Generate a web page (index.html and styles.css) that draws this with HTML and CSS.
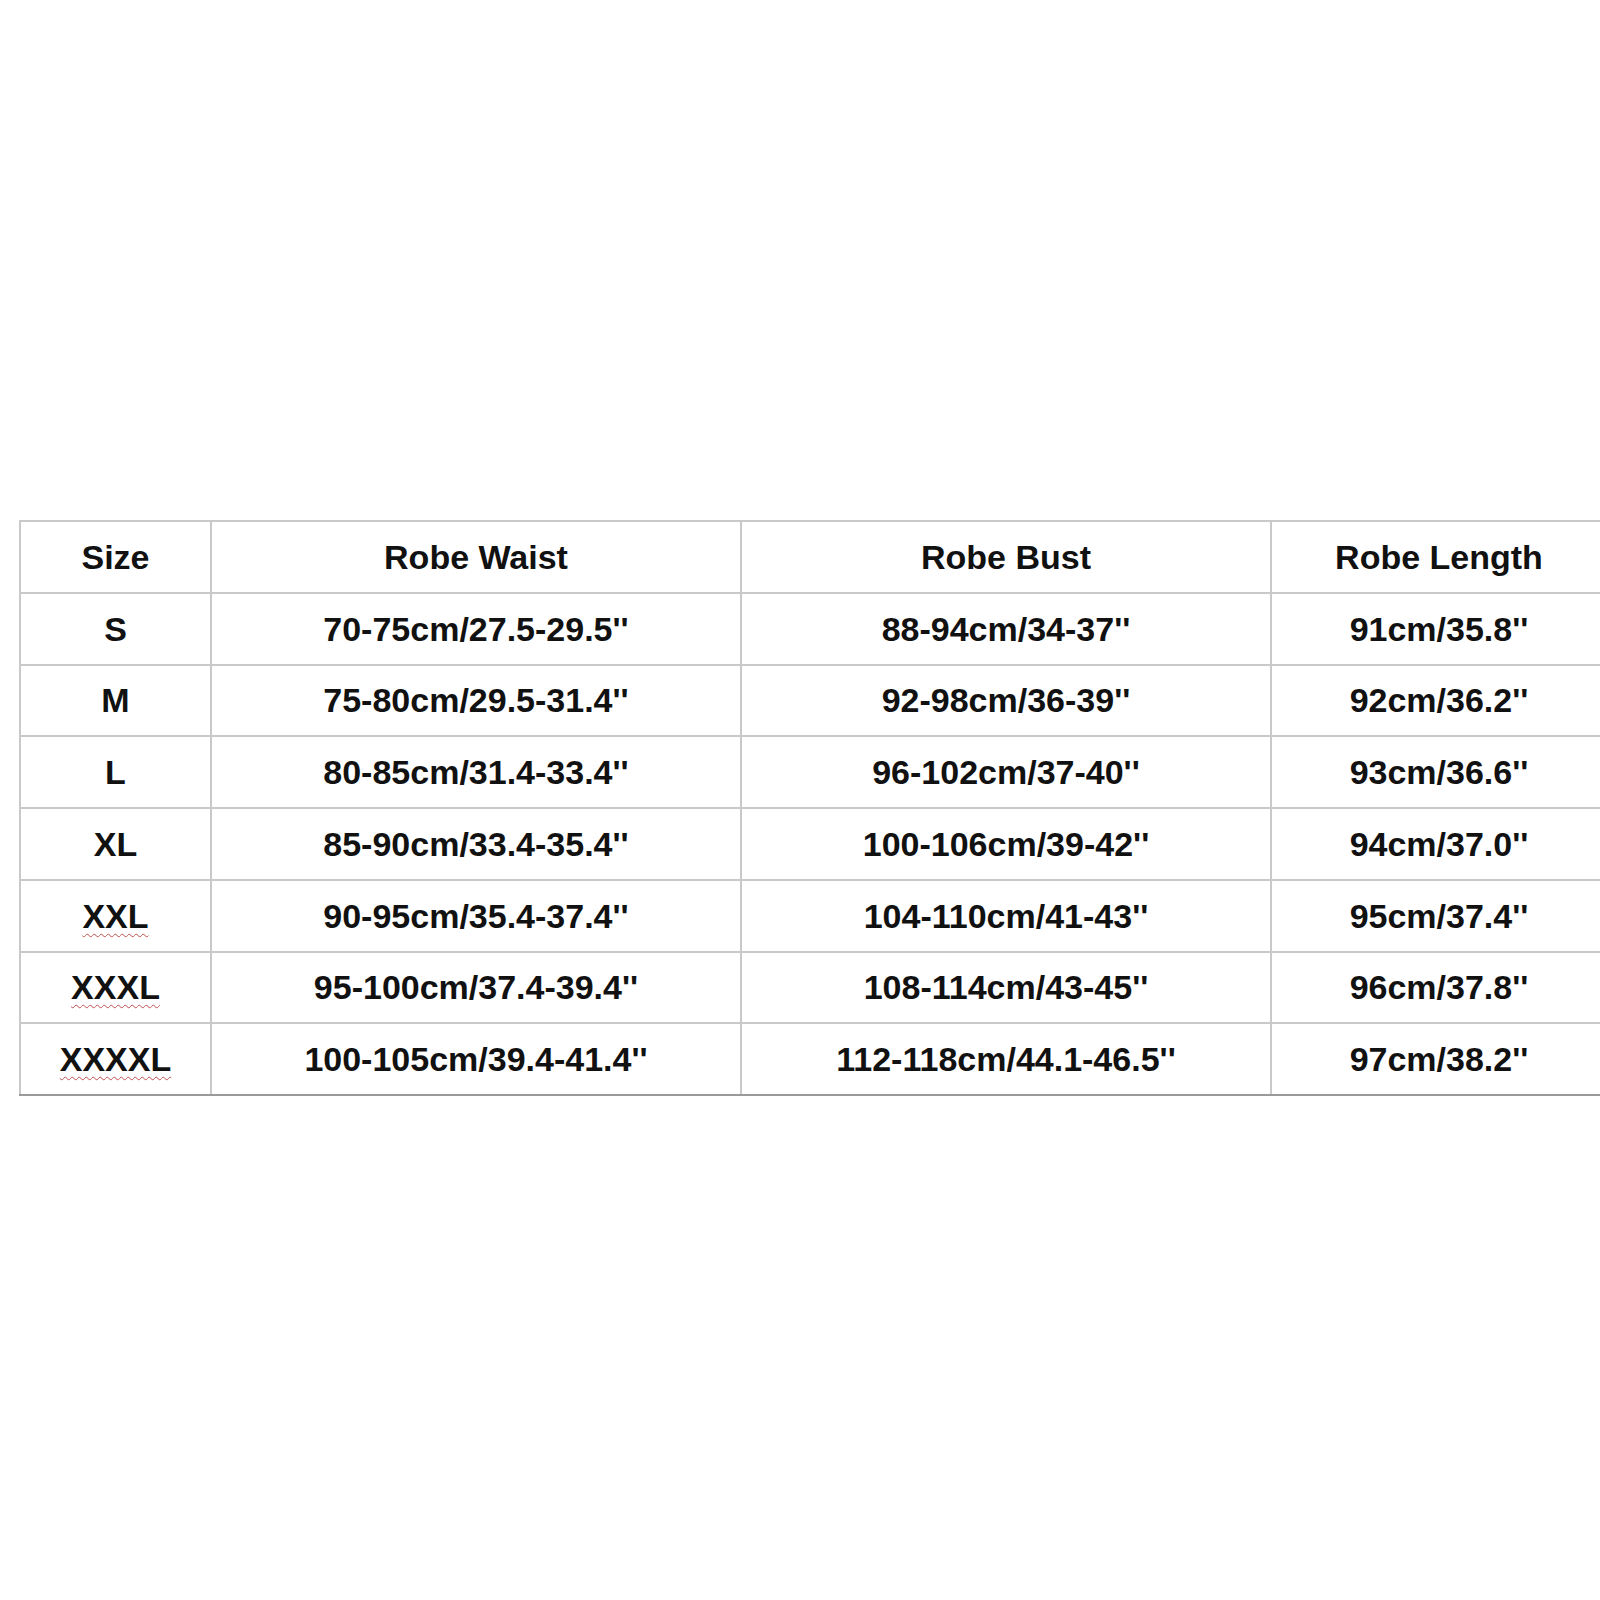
FILE: index.html
```html
<!DOCTYPE html>
<html>
<head>
<meta charset="utf-8">
<link rel="stylesheet" href="styles.css">
</head>
<body>
<div class="page">
<table class="chart">
<colgroup><col class="c1"><col class="c2"><col class="c3"><col class="c4"></colgroup>
<tr><td>Size</td><td>Robe Waist</td><td>Robe Bust</td><td class="last">Robe Length</td></tr>
<tr><td>S</td><td>70-75cm/27.5-29.5''</td><td>88-94cm/34-37''</td><td class="last">91cm/35.8''</td></tr>
<tr><td>M</td><td>75-80cm/29.5-31.4''</td><td>92-98cm/36-39''</td><td class="last">92cm/36.2''</td></tr>
<tr><td>L</td><td>80-85cm/31.4-33.4''</td><td>96-102cm/37-40''</td><td class="last">93cm/36.6''</td></tr>
<tr><td>XL</td><td>85-90cm/33.4-35.4''</td><td>100-106cm/39-42''</td><td class="last">94cm/37.0''</td></tr>
<tr><td><span class="spell">XXL</span></td><td>90-95cm/35.4-37.4''</td><td>104-110cm/41-43''</td><td class="last">95cm/37.4''</td></tr>
<tr><td><span class="spell">XXXL</span></td><td>95-100cm/37.4-39.4''</td><td>108-114cm/43-45''</td><td class="last">96cm/37.8''</td></tr>
<tr class="bottom"><td><span class="spell">XXXXL</span></td><td>100-105cm/39.4-41.4''</td><td>112-118cm/44.1-46.5''</td><td class="last">97cm/38.2''</td></tr>
</table>
</div>
</body>
</html>
```
FILE: styles.css
```css
html, body {
  margin: 0;
  padding: 0;
  background: #ffffff;
  overflow: hidden;
}
.page {
  padding-top: 520px;
  padding-left: 19px;
  width: 1600px;
  box-sizing: border-box;
}
.chart {
  border-collapse: collapse;
  table-layout: fixed;
  width: 1586px;
  font-family: "Liberation Sans", Arial, sans-serif;
  font-weight: bold;
  font-size: 34px;
  color: #111111;
}
.c1 { width: 191px; }
.c2 { width: 530px; }
.c3 { width: 530px; }
.c4 { width: 335px; }
.chart td {
  border: 2px solid #c9c9c9;
  height: 69.75px;
  padding: 0;
  text-align: center;
  vertical-align: middle;
  line-height: 1;
}
.chart td.last {
  border-right: none;
}
.chart tr.bottom td {
  border-bottom: 2px solid #9a9a9a;
}
.spell {
  text-decoration: underline wavy #c0504d;
  text-decoration-thickness: 1px;
  text-underline-offset: 5px;
}
```
